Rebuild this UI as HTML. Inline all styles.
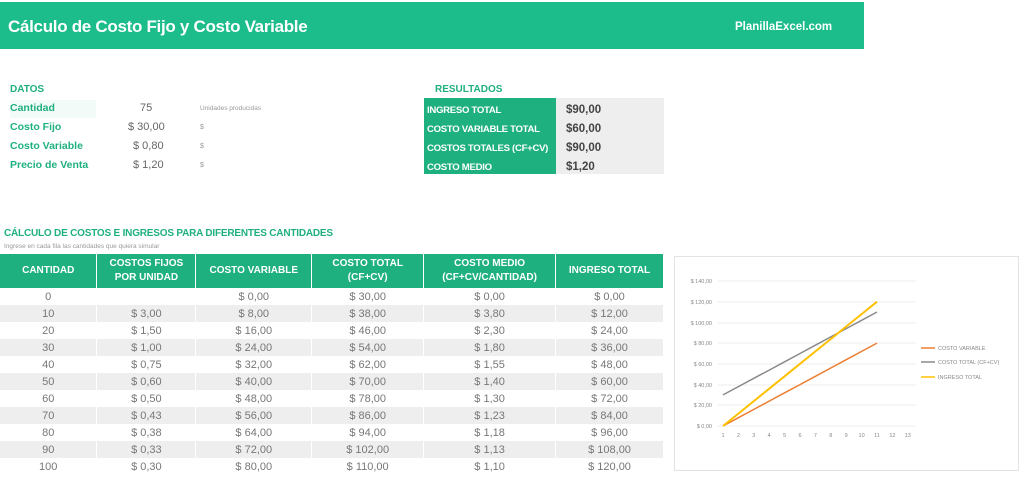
<!DOCTYPE html>
<html><head><meta charset="utf-8"><style>
*{margin:0;padding:0;box-sizing:border-box}
body{width:1024px;height:478px;background:#fff;font-family:"Liberation Sans",sans-serif;position:relative;overflow:hidden;color:#666}
.a{position:absolute;white-space:nowrap}
.bar{left:0;top:2px;width:864px;height:47px;background:#1cbd8b}
.g{color:#1fb07f;font-weight:bold}
table{position:absolute;border-collapse:collapse;font-size:11px}
td{text-align:center;color:#777;padding:0;border-right:1.5px solid #fff}
th{background:#1fb07f;color:#fff;font-size:10px;font-weight:bold;border-right:1.5px solid #fff;line-height:14px}
tr.s td{background:#eee}
tr.r{height:17px}
</style></head><body>
<div class="a bar"></div>
<div class="a" style="left:8px;top:17px;font-size:17px;font-weight:bold;color:#fff;letter-spacing:-0.3px">Cálculo de Costo Fijo y Costo Variable</div>
<div class="a" style="left:735px;top:21px;font-size:11.5px;font-weight:bold;color:#fff">PlanillaExcel.com</div>

<div class="a g" style="left:10px;top:84px;font-size:10px">DATOS</div>
<div class="a" style="left:10px;top:100px;width:86px;background:#f2fbf8;height:18px"></div>
<div class="a g" style="left:10px;top:102px;font-size:10.5px">Cantidad</div>
<div class="a g" style="left:10px;top:121px;font-size:10.5px">Costo Fijo</div>
<div class="a g" style="left:10px;top:140px;font-size:10.5px">Costo Variable</div>
<div class="a g" style="left:10px;top:159px;font-size:10.5px">Precio de Venta</div>
<div class="a" style="left:140px;top:102px;font-size:11px">75</div>
<div class="a" style="left:128px;top:121px;font-size:11px">$ 30,00</div>
<div class="a" style="left:133px;top:140px;font-size:11px">$ 0,80</div>
<div class="a" style="left:133px;top:159px;font-size:11px">$ 1,20</div>
<div class="a" style="left:200px;top:105px;font-size:6.5px;color:#999">Unidades producidas</div>
<div class="a" style="left:200px;top:124px;font-size:7px;color:#999">$</div>
<div class="a" style="left:200px;top:143px;font-size:7px;color:#999">$</div>
<div class="a" style="left:200px;top:162px;font-size:7px;color:#999">$</div>

<div class="a g" style="left:435px;top:84px;font-size:10px">RESULTADOS</div>
<div class="a" style="left:424px;top:98px;width:132px;height:76px;background:#1fb07f"></div>
<div class="a" style="left:556px;top:98px;width:108px;height:76px;background:#eeeeee"></div>
<div class="a" style="left:427px;top:101px;font-size:9.6px;font-weight:bold;color:#fff;line-height:19px;letter-spacing:-0.3px">INGRESO TOTAL<br>COSTO VARIABLE TOTAL<br>COSTOS TOTALES (CF+CV)<br>COSTO MEDIO</div>
<div class="a" style="left:566px;top:101px;font-size:11.5px;font-weight:bold;color:#444;line-height:19px">$90,00<br>$60,00<br>$90,00<br>$1,20</div>

<div class="a g" style="left:4px;top:228px;font-size:10px;letter-spacing:-0.2px">CÁLCULO DE COSTOS E INGRESOS PARA DIFERENTES CANTIDADES</div>
<div class="a" style="left:4px;top:243px;font-size:6.5px;color:#999">Ingrese en cada fila las cantidades que quiera simular</div>

<table style="left:0;top:254px;width:664px">
<tr style="height:34px"><th style="width:97px">CANTIDAD</th><th style="width:99px">COSTOS FIJOS POR UNIDAD</th><th style="width:116px">COSTO VARIABLE</th><th style="width:112px">COSTO TOTAL<br>(CF+CV)</th><th style="width:132px">COSTO MEDIO<br>(CF+CV/CANTIDAD)</th><th style="width:108px">INGRESO TOTAL</th></tr>
<tr class="r"><td>0</td><td></td><td>$ 0,00</td><td>$ 30,00</td><td>$ 0,00</td><td>$ 0,00</td></tr>
<tr class="r s"><td>10</td><td>$ 3,00</td><td>$ 8,00</td><td>$ 38,00</td><td>$ 3,80</td><td>$ 12,00</td></tr>
<tr class="r"><td>20</td><td>$ 1,50</td><td>$ 16,00</td><td>$ 46,00</td><td>$ 2,30</td><td>$ 24,00</td></tr>
<tr class="r s"><td>30</td><td>$ 1,00</td><td>$ 24,00</td><td>$ 54,00</td><td>$ 1,80</td><td>$ 36,00</td></tr>
<tr class="r"><td>40</td><td>$ 0,75</td><td>$ 32,00</td><td>$ 62,00</td><td>$ 1,55</td><td>$ 48,00</td></tr>
<tr class="r s"><td>50</td><td>$ 0,60</td><td>$ 40,00</td><td>$ 70,00</td><td>$ 1,40</td><td>$ 60,00</td></tr>
<tr class="r"><td>60</td><td>$ 0,50</td><td>$ 48,00</td><td>$ 78,00</td><td>$ 1,30</td><td>$ 72,00</td></tr>
<tr class="r s"><td>70</td><td>$ 0,43</td><td>$ 56,00</td><td>$ 86,00</td><td>$ 1,23</td><td>$ 84,00</td></tr>
<tr class="r"><td>80</td><td>$ 0,38</td><td>$ 64,00</td><td>$ 94,00</td><td>$ 1,18</td><td>$ 96,00</td></tr>
<tr class="r s"><td>90</td><td>$ 0,33</td><td>$ 72,00</td><td>$ 102,00</td><td>$ 1,13</td><td>$ 108,00</td></tr>
<tr class="r"><td>100</td><td>$ 0,30</td><td>$ 80,00</td><td>$ 110,00</td><td>$ 1,10</td><td>$ 120,00</td></tr>
</table>

<svg class="a" style="left:0;top:0" width="1024" height="478" viewBox="0 0 1024 478" font-family="Liberation Sans" font-size="5.5" fill="#888">
<rect x="674.5" y="256.5" width="344" height="214" fill="none" stroke="#e3e3e3"/>
<g stroke="#e8e8e8" stroke-width="0.8">
<line x1="718" x2="916" y1="281" y2="281"/><line x1="718" x2="916" y1="302" y2="302"/><line x1="718" x2="916" y1="323" y2="323"/><line x1="718" x2="916" y1="343" y2="343"/><line x1="718" x2="916" y1="364" y2="364"/><line x1="718" x2="916" y1="385" y2="385"/><line x1="718" x2="916" y1="405" y2="405"/><line x1="718" x2="916" y1="426" y2="426"/>
</g>
<g text-anchor="end"><text x="712" y="283">$ 140,00</text><text x="712" y="304">$ 120,00</text><text x="712" y="325">$ 100,00</text><text x="712" y="345">$ 80,00</text><text x="712" y="366">$ 60,00</text><text x="712" y="387">$ 40,00</text><text x="712" y="407">$ 20,00</text><text x="712" y="428">$ 0,00</text></g>
<g text-anchor="middle"><text x="723" y="437">1</text><text x="738.4" y="437">2</text><text x="753.8" y="437">3</text><text x="769.2" y="437">4</text><text x="784.6" y="437">5</text><text x="800" y="437">6</text><text x="815.4" y="437">7</text><text x="830.8" y="437">8</text><text x="846.2" y="437">9</text><text x="861.6" y="437">10</text><text x="877" y="437">11</text><text x="892.4" y="437">12</text><text x="907.8" y="437">13</text></g>
<polyline fill="none" stroke="#ed7d31" stroke-width="1.5" points="723,426 738.4,417.7 753.8,409.4 769.2,401.1 784.6,392.8 800,384.6 815.4,376.3 830.8,368 846.2,359.7 861.6,351.4 877,343.1"/>
<polyline fill="none" stroke="#8a8a8a" stroke-width="1.5" points="723,394.9 738.4,386.6 753.8,378.3 769.2,370.1 784.6,361.8 800,353.5 815.4,345.2 830.8,336.9 846.2,328.6 861.6,320.3 877,312"/>
<polyline fill="none" stroke="#ffc000" stroke-width="2" points="723,426 738.4,413.6 753.8,401.1 769.2,388.7 784.6,376.3 800,363.8 815.4,351.4 830.8,339 846.2,326.5 861.6,314.1 877,301.7"/>
<line x1="921" x2="935" y1="348" y2="348" stroke="#ed7d31" stroke-width="1.5"/><text x="938" y="350">COSTO VARIABLE</text>
<line x1="921" x2="935" y1="362" y2="362" stroke="#8a8a8a" stroke-width="1.5"/><text x="938" y="364">COSTO TOTAL (CF+CV)</text>
<line x1="921" x2="935" y1="377" y2="377" stroke="#ffc000" stroke-width="1.5"/><text x="938" y="379">INGRESO TOTAL</text>
</svg>
</body></html>
